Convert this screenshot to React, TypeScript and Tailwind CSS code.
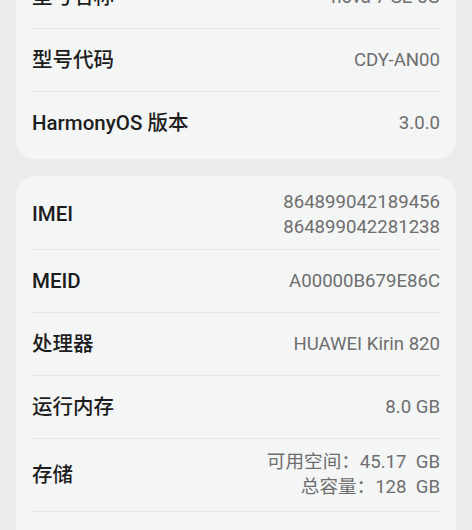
import React from 'react'

type Row = { label: string; value: string[]; tall?: string }

const cardOne: Row[] = [
  { label: '型号名称', value: ['nova 7 SE 5G'] },
  { label: '型号代码', value: ['CDY-AN00'] },
  { label: 'HarmonyOS 版本', value: ['3.0.0'] },
]

const cardTwo: Row[] = [
  { label: 'IMEI', value: ['864899042189456', '864899042281238'], tall: 'h-[70px]' },
  { label: 'MEID', value: ['A00000B679E86C'] },
  { label: '处理器', value: ['HUAWEI Kirin 820'] },
  { label: '运行内存', value: ['8.0 GB'] },
  { label: '存储', value: ['可用空间：45.17  GB', '总容量：128  GB'], tall: 'h-[73px]' },
  { label: '状态', value: [''] },
]

const font = { fontFamily: 'Roboto, "Noto Sans CJK SC", sans-serif' }

function InfoRow({ row, last }: { row: Row; last: boolean }) {
  return (
    <div className={`flex items-center justify-between ${row.tall ?? 'h-[63px]'} ${last ? '' : 'border-b border-[#e4e5e6]'}`}>
      <span className="text-[20.5px] font-medium text-[#1d1d1d]">{row.label}</span>
      <div className="flex flex-col items-end text-[18.6px] leading-[25px] text-[#6e6e6e]">
        {row.value.map((v, i) => (
          <span key={i} className="whitespace-pre">{v}</span>
        ))}
      </div>
    </div>
  )
}

function Card({ rows }: { rows: Row[] }) {
  return (
    <div className="rounded-[20px] bg-[#f4f5f5] px-4 py-1">
      {rows.map((row, i) => (
        <InfoRow key={row.label} row={row} last={i === rows.length - 1} />
      ))}
    </div>
  )
}

export default function App() {
  return (
    <div className="h-[530px] w-[472px] overflow-hidden bg-[#ececed]" style={font}>
      <div className="-mt-[38px] flex flex-col gap-[17px] px-4">
        <Card rows={cardOne} />
        <Card rows={cardTwo} />
      </div>
    </div>
  )
}
